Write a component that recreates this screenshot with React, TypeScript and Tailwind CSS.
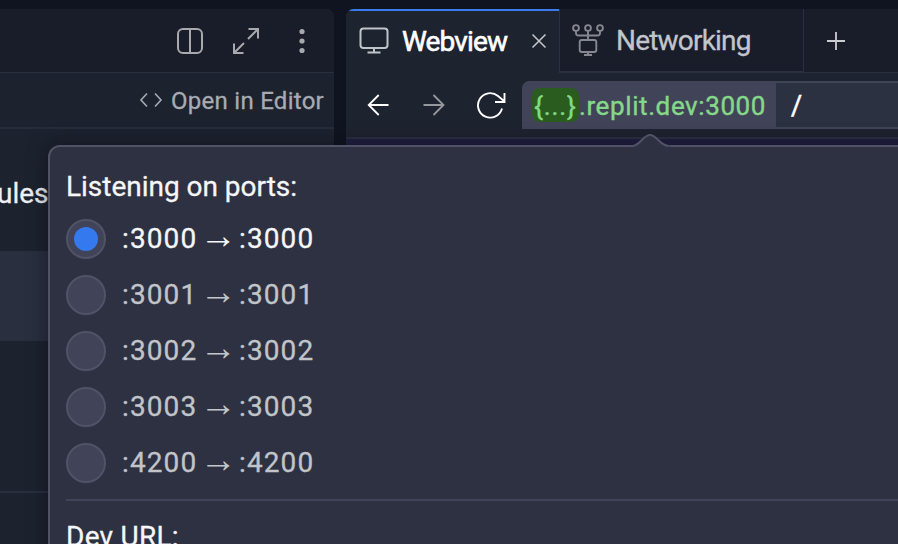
import React from 'react';

const ports = ['3000', '3001', '3002', '3003', '4200'];

function LeftPanel() {
  return (
    <section className="w-[334px] shrink-0 overflow-hidden rounded-tr-lg bg-[#1d222f]">
      <div className="flex h-16 items-center justify-end border-b border-[#2b3040] bg-[#191d2a] pr-[18px] text-[#a7a9ad]">
        <svg className="mr-7 h-7 w-7" viewBox="0 0 28 28" fill="none" stroke="currentColor" strokeWidth="2">
          <rect x="2" y="2" width="24" height="24" rx="5" />
          <path d="M14 2v24" />
        </svg>
        <svg className="mr-7 h-7 w-7" viewBox="0 0 28 28" fill="none" stroke="currentColor" strokeWidth="2">
          <path d="M16.500 2H26v9.500M25.500 2.500L16 12M2 16.500V26h9.500M2.500 25.500L12 16" />
        </svg>
        <svg className="h-7 w-7" viewBox="0 0 28 28" fill="currentColor">
          <circle cx="14" cy="4.500" r="2.600" />
          <circle cx="14" cy="14" r="2.600" />
          <circle cx="14" cy="23.500" r="2.600" />
        </svg>
      </div>
      <div className="flex h-14 items-center justify-end border-b-2 border-[#272c3c] pr-[10px] text-[#a7abb3]">
        <svg className="mr-2 h-6 w-6" viewBox="0 0 24 24" fill="none" stroke="currentColor" strokeWidth="1.600">
          <path d="M8 5.500L2 12l6 6.500M16 5.500L22 12l-6 6.500" />
        </svg>
        <span className="whitespace-nowrap pt-[2px] text-[24px] leading-8 tracking-[0.270px] [-webkit-text-stroke:0.300px]">Open in Editor</span>
      </div>
      <div className="flex h-[122px] items-center pt-[8px]">
        <span className="-ml-[3px] text-[28px] leading-9 text-[#eef0f3] [-webkit-text-stroke:0.300px]">ules</span>
      </div>
      <div className="h-[90px] bg-[#2a2f40]" />
      <div className="h-[152px] border-b-2 border-[#2a2f3e]" />
    </section>
  );
}

function TabBar() {
  return (
    <div className="flex h-16 bg-[#191d2a]">
      <div className="flex w-[213px] shrink-0 items-center border-t-2 border-[#3a7bed] bg-[#1e2330] pl-3 text-white">
        <svg className="h-8 w-8 shrink-0 text-[#c0c3c7]" viewBox="0 0 32 32" fill="none" stroke="currentColor" strokeWidth="2">
          <rect x="2.500" y="2.500" width="27" height="19.500" rx="3" />
          <path d="M16 22v4.500M9.500 26.500h13" />
        </svg>
        <span className="ml-[12px] w-[106px] whitespace-nowrap text-[28px] leading-9 tracking-[-0.850px] [-webkit-text-stroke:0.600px]">Webview</span>
        <svg className="ml-[23px] -mt-[3px] h-4 w-4 shrink-0 text-[#c0c3c7]" viewBox="0 0 16 16" fill="none" stroke="currentColor" strokeWidth="1.600">
          <path d="M1.500 1.500l13 13M14.500 1.500l-13 13" />
        </svg>
      </div>
      <div className="flex w-[245px] shrink-0 items-center border-b-2 border-l border-r border-[#2b3040] pl-3 text-[#c2c5ca]">
        <svg className="h-8 w-8 shrink-0 text-[#858890]" viewBox="0 0 32 32" fill="none" stroke="currentColor" strokeWidth="1.900">
          <circle cx="4" cy="4" r="2.900" />
          <circle cx="16" cy="4" r="2.900" />
          <circle cx="28" cy="4" r="2.900" />
          <path d="M4 7v2a2.500 2.500 0 0 0 2.500 2.500h19A2.500 2.500 0 0 0 28 9V7M16 7v9" />
          <rect x="7.700" y="16" width="16.600" height="12" rx="2" />
          <path d="M16 28v3M12 31h8" />
        </svg>
        <span className="ml-3 whitespace-nowrap pt-[2px] text-[28px] leading-9 tracking-[-0.800px] [-webkit-text-stroke:0.300px]">Networking</span>
      </div>
      <div className="flex flex-1 items-center border-b border-[#2b3040] pl-[23px] text-[#c9ccd0]">
        <svg className="h-[18px] w-[18px]" viewBox="0 0 18 18" fill="none" stroke="currentColor" strokeWidth="1.800">
          <path d="M9 0v18M0 9h18" />
        </svg>
      </div>
    </div>
  );
}

function AddressBar() {
  return (
    <div className="flex h-[66px] items-center border-b-2 border-[#2b3040] pl-[20px]">
      <svg className="h-6 w-6 shrink-0 text-white" viewBox="0 0 24 24" fill="none" stroke="currentColor" strokeWidth="1.800">
        <path d="M22.500 12H2.700M12.700 2L2.700 12l10 10" />
      </svg>
      <svg className="ml-8 h-6 w-6 shrink-0 text-[#96989d]" viewBox="0 0 24 24" fill="none" stroke="currentColor" strokeWidth="1.800">
        <path d="M1.500 12h20M11.500 2l10 10-10 10" />
      </svg>
      <svg className="ml-[30px] h-8 w-8 shrink-0 text-white" viewBox="0 0 32 32" fill="none" stroke="currentColor" strokeWidth="1.900">
        <path d="M26 19.500A12.200 12.200 0 1 1 22 7L28 12M28.500 4v9H19" />
      </svg>
      <div className="ml-[14px] flex h-12 w-[420px] shrink-0 rounded-tl-lg border-y-2 border-[#414459] bg-[#2c3141]">
        <div className="-my-[2px] flex h-12 w-[254px] items-center rounded-tl-lg bg-[#414459] pl-[10px] text-[26px] leading-8 text-[#85d888] [-webkit-text-stroke:0.400px]">
          <span className="flex h-[34px] w-[47px] shrink-0 items-center justify-center rounded-lg bg-[#2a5c1f] pt-px tracking-[0.900px]">{'{...}'}</span>
          <span className="whitespace-nowrap pt-[2px] tracking-[0.600px]">.replit.dev:3000</span>
        </div>
        <span className="ml-[15px] text-[27px] leading-[47px] text-white [-webkit-text-stroke:0.500px]">/</span>
      </div>
    </div>
  );
}

function PortRow({ port, selected }: { port: string; selected: boolean }) {
  return (
    <li className={selected ? 'flex h-10 items-center text-[#f5f6f8]' : 'flex h-10 items-center text-[#c1c4c9]'}>
      <span className="flex h-10 w-10 items-center justify-center rounded-full border-2 border-[#505367] bg-[#414459]">
        {selected && <span className="h-6 w-6 rounded-full bg-[#3579ef]" />}
      </span>
      <span className="ml-4 flex items-center text-[28px] leading-9 tracking-[1.100px] [-webkit-text-stroke:0.300px]">
        <span className="w-[75px]">:{port}</span>
        <span className="flex h-9 w-[42px] items-center justify-center pb-[7px] font-['Liberation_Sans'] text-[37px] tracking-normal [-webkit-text-stroke:0px]">→</span>
        <span>:{port}</span>
      </span>
    </li>
  );
}

function PortsPopover() {
  return (
    <div className="absolute left-[48px] top-[145px] h-[440px] w-[900px] rounded-tl-xl border-2 border-[#505367] bg-[#2d3141] pl-4 shadow-[0_0_20px_rgba(5,8,18,0.5)]">
      <svg className="absolute left-[582px] top-[-14px] h-4 w-10" viewBox="0 0 40 16" fill="none">
        <path d="M0 13C8 13 10 2 18 2S28 13 38 13V16H0Z" fill="#2d3141" />
        <path d="M0 13C8 13 11 2 18 2S28 13 37 13" stroke="#505367" strokeWidth="2" />
      </svg>
      <h2 className="mt-[22px] whitespace-nowrap text-[28px] leading-9 tracking-[-0.020px] text-[#f5f6f8] [-webkit-text-stroke:0.300px]">Listening on ports:</h2>
      <ul className="mt-[14px] flex flex-col gap-4">
        {ports.map((port, index) => (
          <PortRow key={port} port={port} selected={index === 0} />
        ))}
      </ul>
      <div className="mt-4 border-t-2 border-[#414459] pt-[18px]">
        <h2 className="text-[28px] leading-9 tracking-[0.250px] text-[#f5f6f8] [-webkit-text-stroke:0.300px]">Dev URL:</h2>
      </div>
    </div>
  );
}

export default function App() {
  return (
    <main className="relative flex h-[544px] w-[898px] gap-3 overflow-hidden bg-[#0f1420] pt-[9px] font-['Roboto','Liberation_Sans',sans-serif]">
      <LeftPanel />
      <section className="flex-1 overflow-hidden rounded-tl-lg bg-[#1e2330]">
        <TabBar />
        <AddressBar />
        <div className="h-[420px] bg-[#231f42]" />
      </section>
      <PortsPopover />
    </main>
  );
}
